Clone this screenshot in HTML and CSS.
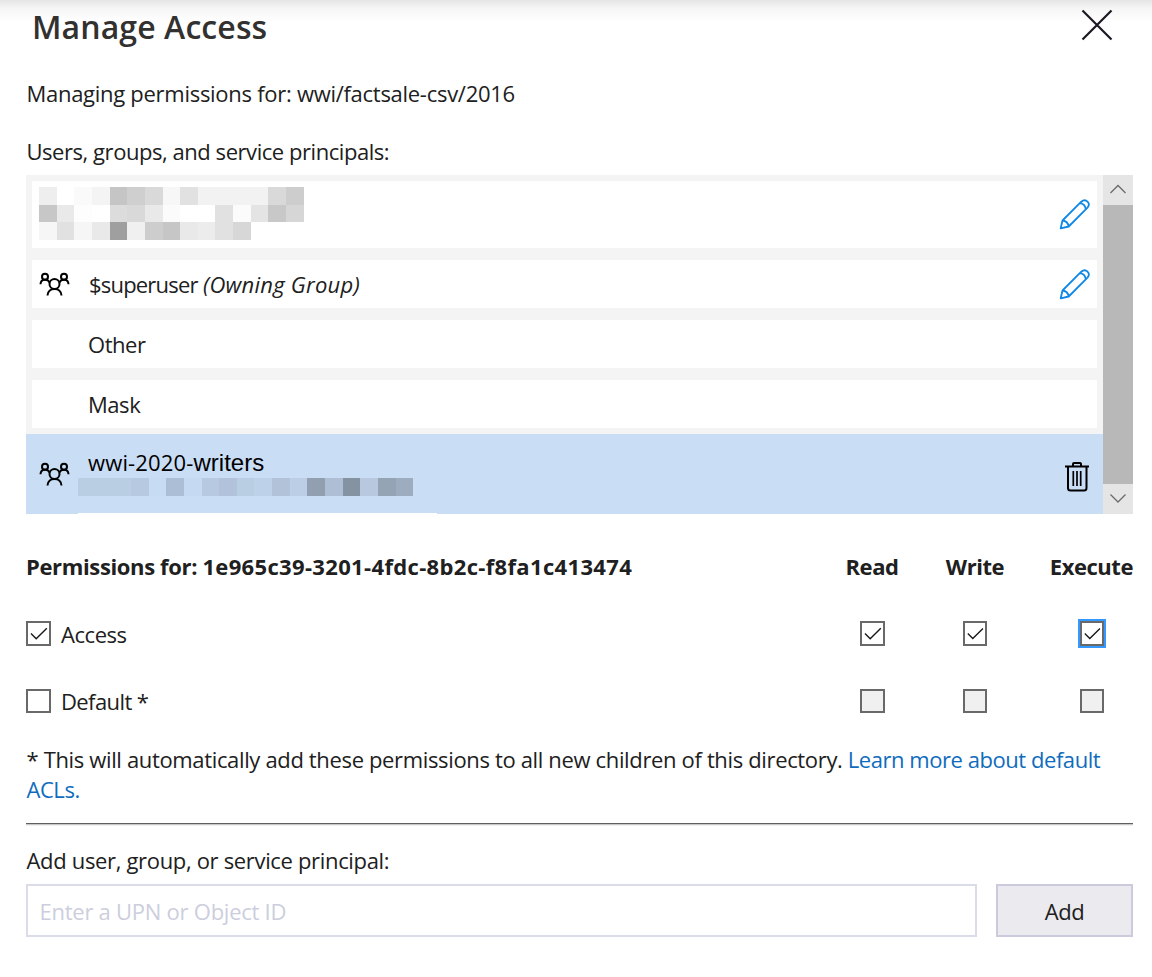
FILE: index.html
```html
<!DOCTYPE html>
<html lang="en">
<head>
<meta charset="utf-8">
<title>Manage Access</title>
<link rel="stylesheet" href="styles.css">
</head>
<body>
<svg class="defs" width="0" height="0" aria-hidden="true">
  <symbol id="people" viewBox="0 0 32 26">
    <g fill="none" stroke="currentColor" stroke-width="2">
      <circle cx="15.5" cy="12" r="5"/><circle cx="6" cy="4.7" r="3"/><circle cx="25" cy="4.7" r="3"/>
      <path d="M8.5 23.500C8.800 14.800 22.200 14.800 22.500 23.500M1.500 12.200C1.800 6.600 8.800 6.600 10.600 10.600M29.500 12.200C29.200 6.600 22.200 6.600 20.400 10.600"/>
    </g>
  </symbol>
  <symbol id="pencil" viewBox="0 0 32 32">
    <g fill="none" stroke="currentColor" stroke-width="1.8" stroke-linejoin="round">
      <path d="M1.7 30.3 3.500 22.500 22.300 3.700C26.800-.1 32.200 5.300 28.500 9.700L9.700 28.500ZM3.500 22.500Q8.800 23.200 9.700 28.500M20.800 5.200Q26 5.800 26.800 11.200"/>
    </g>
  </symbol>
  <symbol id="tick" viewBox="0 0 25 25">
    <path d="M5 12.500 10.200 17.700 20.800 7.200" fill="none" stroke="#171717" stroke-width="1.4"/>
  </symbol>
</svg>
<main class="panel">
  <header class="head">
    <h1>Manage Access</h1>
    <svg class="close" viewBox="0 0 32 32"><path d="M1.5 1.5 30.5 30.5M30.5 1.5 1.5 30.5" stroke="#1c1824" stroke-width="2.2"/></svg>
  </header>
  <p class="managing">Managing permissions for: wwi/factsale-csv/2016</p>
  <p class="label">Users, groups, and service principals:</p>
  <section class="list">
    <div class="rows">
      <div class="row tall">
        <svg class="mosaic" width="265" height="53" shape-rendering="crispEdges">
          <path fill="#eee" d="M0 0h18v18H0z"/><path fill="#fafafa" d="M35 0h18v18H35z"/><path fill="#f4f4f4" d="M53 0h18v18H53z"/><path fill="#c5c5c5" d="M71 0h17v18H71z"/><path fill="#cfcfcf" d="M88 0h18v18H88z"/><path fill="#d9d9d9" d="M106 0h18v18h-18z"/><path fill="#f7f7f7" d="M124 0h17v18h-17z"/><path fill="#e1e1e1" d="M141 0h18v18h-18z"/><path fill="#f2f2f2" d="M159 0h76v18h-76z"/><path fill="#d9d9d9" d="M229 0h18v18h-18z"/><path fill="#cdcdcd" d="M247 0h18v18h-18z"/>
          <path fill="#c7c7c7" d="M0 18h18v17H0z"/><path fill="#e9e9e9" d="M18 18h17v17H18z"/><path fill="#fdfdfd" d="M35 18h18v17H35z"/><path fill="#dcdcdc" d="M71 18h17v17H71z"/><path fill="#d9d9d9" d="M88 18h18v17H88z"/><path fill="#e9e9e9" d="M106 18h18v17h-18z"/><path fill="#fbfbfb" d="M124 18h17v17h-17z"/><path fill="#e1e1e1" d="M176 18h18v17h-18z"/><path fill="#fbfbfb" d="M194 18h18v17h-18z"/><path fill="#e4e4e4" d="M212 18h17v17h-17z"/><path fill="#c8c8c8" d="M229 18h18v17h-18z"/><path fill="#d6d6d6" d="M247 18h18v17h-18z"/>
          <path fill="#f6f6f6" d="M0 35h18v18H0z"/><path fill="#e1e1e1" d="M18 35h17v18H18z"/><path fill="#f6f6f6" d="M35 35h18v18H35z"/><path fill="#e9e9e9" d="M53 35h18v18H53z"/><path fill="#9f9f9f" d="M71 35h17v18H71z"/><path fill="#f0f0f0" d="M88 35h18v18H88z"/><path fill="#cdcdcd" d="M106 35h18v18h-18z"/><path fill="#c6c6c6" d="M124 35h17v18h-17z"/><path fill="#e9e9e9" d="M141 35h18v18h-18z"/><path fill="#ececec" d="M159 35h17v18h-17z"/><path fill="#e1e1e1" d="M176 35h18v18h-18z"/><path fill="#d7d7d7" d="M194 35h18v18h-18z"/>
        </svg>
        <svg class="pencil"><use href="#pencil"/></svg>
      </div>
      <div class="row">
        <svg class="people"><use href="#people"/></svg>
        <span class="name"><span class="super">$superuser</span> <em>(Owning Group)</em></span>
        <svg class="pencil"><use href="#pencil"/></svg>
      </div>
      <div class="row"><span class="name indent">Other</span></div>
      <div class="row"><span class="name indent">Mask</span></div>
      <div class="row selected">
        <svg class="people"><use href="#people"/></svg>
        <div class="principal">
          <span class="group">wwi-2020-<span class="writers">writers</span></span>
          <svg class="ids" width="335" height="18" shape-rendering="crispEdges">
            <path fill="#b9cee3" d="M0 0h53v18H0z"/><path fill="#b7c9e0" d="M53 0h18v18H53z"/><path fill="#c7dbf3" d="M71 0h17v18H71z"/><path fill="#abbed5" d="M88 0h18v18H88z"/><path fill="#c5daf2" d="M106 0h18v18h-18z"/><path fill="#b7c9e1" d="M124 0h17v18h-17z"/><path fill="#b1c2da" d="M141 0h18v18h-18z"/><path fill="#b9cde3" d="M159 0h17v18h-17z"/><path fill="#bdd2e8" d="M176 0h18v18h-18z"/><path fill="#b1c2d9" d="M194 0h18v18h-18z"/><path fill="#bbcee6" d="M212 0h17v18h-17z"/><path fill="#919fb0" d="M229 0h18v18h-18z"/><path fill="#aebed5" d="M247 0h18v18h-18z"/><path fill="#8592a2" d="M265 0h17v18h-17z"/><path fill="#b7c8df" d="M282 0h18v18h-18z"/><path fill="#95a4b4" d="M300 0h18v18h-18z"/><path fill="#9eacbf" d="M318 0h17v18h-17z"/>
          </svg>
        </div>
        <svg class="trash" viewBox="0 0 26 32"><g fill="none" stroke="#000" stroke-width="2"><path d="M1 5.500H25M4 5.500V27Q4 29.500 6.500 29.500H20Q22.500 29.500 22.500 27V5.500M9 5.500V3Q9 2 10 2H16Q17 2 17 3V5.500"/><path d="M9.300 10V25M13 10V25M16.700 10V25" stroke-width="1.700"/></g></svg>
      </div>
    </div>
    <div class="scroll">
      <svg class="arrow" viewBox="0 0 30 30"><path d="M7.500 18 15 10.500 22.500 18"/></svg>
      <div class="thumb"></div>
      <svg class="arrow" viewBox="0 0 30 30"><path d="M7.500 10.500 15 18 22.500 10.500"/></svg>
    </div>
  </section>
  <section class="perms">
    <strong class="perm-title">Permissions for: <span class="guid">1e965c39-3201-4fdc-8b2c-f8fa1c413474</span></strong>
    <strong>Read</strong><strong>Write</strong><strong class="exec">Execute</strong>
    <div class="option"><span class="box"><svg><use href="#tick"/></svg></span><span class="access">Access</span></div>
    <span class="box"><svg><use href="#tick"/></svg></span>
    <span class="box narrow"><svg><use href="#tick"/></svg></span>
    <span class="box narrow last focus"><svg><use href="#tick"/></svg></span>
    <div class="option default"><span class="box short"></span><span>Default *</span></div>
    <span class="box short off"></span><span class="box narrow short off"></span><span class="box narrow short last off"></span>
  </section>
  <p class="note"><span class="note-text">* This will automatically add these permissions to all new children of this directory.</span> <a>Learn more about default<br>ACLs.</a></p>
  <hr>
  <p class="add-label">Add user, group, or service principal:</p>
  <div class="form">
    <input class="upn" placeholder="Enter a UPN or Object ID">
    <button class="add">Add</button>
  </div>
</main>
</body>
</html>
```
FILE: styles.css
```css
* { box-sizing: border-box; }
body { margin: 0; background: #fff; color: #202020; font: 22px/30px "Open Sans", "Noto Sans", sans-serif; letter-spacing: -.45px; }
.defs { display: block; height: 0; }
.panel { height: 977px; padding: 0 19px 0 26px; background: linear-gradient(#e5e5e5 0, #f5f5f5 8px, #fff 22px); overflow: hidden; white-space: nowrap; }
h1, p, hr { margin: 0; }
svg { display: block; flex: none; }
.head { display: flex; justify-content: space-between; height: 78px; padding: 7px 20px 0 6px; }
h1 { font-size: 32px; line-height: 40px; font-weight: 600; letter-spacing: .1px; color: #323130; }
.close { width: 32px; height: 32px; margin-top: 2px; }
.managing { height: 58px; padding-left: .5px; letter-spacing: -.28px; }
.label { height: 39px; padding-left: .5px; letter-spacing: -.45px; }
.list { display: flex; height: 339px; background: #f4f4f4; }
.rows { flex: 1; display: flex; flex-direction: column; gap: 12px; padding-top: 6px; }
.row { display: flex; align-items: center; height: 48px; margin: 0 6px; padding: 0 6px 0 7px; background: #fff; }
.tall { height: 67px; }
.mosaic { margin-top: -2px; }
.people { width: 32px; height: 26px; margin-top: 2px; color: #000; }
.pencil { width: 32px; height: 32px; margin-left: auto; color: #0f87e4; }
.tall .pencil { margin-top: -1px; }
.name { margin-left: 18px; }
.super { letter-spacing: -.8px; }
em { letter-spacing: .24px; }
.indent { margin-left: 49px; }
.selected { height: 80px; margin: -6px 0 0; padding: 0 13px; background: linear-gradient(#fff, #fff) 52px 79px / 359px 1px no-repeat #c9ddf5; color: #000; }
.principal { display: flex; flex-direction: column; margin: -5px 0 0 7px; }
.group { margin-left: 10px; height: 31px; letter-spacing: .15px; }
.writers { display: inline-block; font: 24px/28px "Liberation Sans", Arial, sans-serif; letter-spacing: 0; }
.trash { width: 26px; height: 32px; margin: 6px 0 0 auto; }
.scroll { display: flex; flex-direction: column; width: 30px; background: #e5e5e5; }
.arrow { width: 30px; height: 30px; fill: none; stroke: #6b6b6b; stroke-width: 1.3; }
.thumb { flex: 1; background: #b8b8b8; }
.perms { display: grid; grid-template-columns: 795px 102px 104px 1fr; grid-template-rows: 30px 105px 30px; padding-top: 37px; justify-items: center; align-items: center; height: 230px; align-content: start; }
strong { font-weight: 700; }
.perms .perm-title { justify-self: start; letter-spacing: -.36px; }
.guid { letter-spacing: .34px; }
.perms .exec { justify-self: end; }
.option { justify-self: start; display: flex; align-items: center; gap: 10px; }
.access { padding-top: 1px; }
.default { letter-spacing: -.6px; }
.box { width: 25px; height: 25px; border: 2px solid #696969; background: #fff; }
.box svg { width: 25px; height: 25px; margin: -2px; }
.narrow { width: 24px; }
.narrow svg { width: 24px; }
.short { height: 24px; }
.last { justify-self: end; margin-right: 29px; }
.off { background: #f0f0f0; }
.focus { outline: 2px solid #3399ff; }
.note { height: 79px; padding-left: .5px; }
.note-text { letter-spacing: -.35px; }
a { color: #0f6cbd; }
hr { height: 3px; border: 0; border-top: 1px solid #606060; background: linear-gradient(#c9c9c9 1px, #f0f0f0 1px); }
.add-label { padding: 19px 0 0 .5px; height: 58px; letter-spacing: -.33px; }
.form { display: flex; gap: 19px; height: 53px; }
.upn { flex: 1; border: 2px solid #dadce7; padding: 0 11.5px; font: inherit; letter-spacing: -.25px; }
.upn::placeholder { color: #cccedd; opacity: 1; }
.add { width: 137px; border: 2px solid #cacbdc; background: #ebeaef; color: #202020; font: inherit; letter-spacing: inherit; padding: 0; border-radius: 0; }
```
